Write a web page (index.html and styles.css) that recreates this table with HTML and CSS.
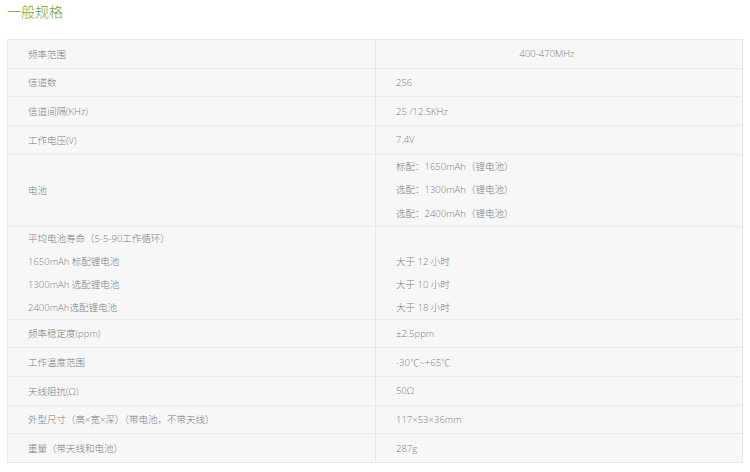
FILE: index.html
```html
<!DOCTYPE html>
<html lang="zh-CN">
<head>
<meta charset="utf-8">
<title>一般规格</title>
<link rel="stylesheet" href="styles.css">
</head>
<body>
<h2 class="title">一般规格</h2>
<table class="spec">
  <tr class="r1">
    <td class="k">频率范围</td>
    <td class="v center">400-470MHz</td>
  </tr>
  <tr class="r1">
    <td class="k">信道数</td>
    <td class="v">256</td>
  </tr>
  <tr class="r1">
    <td class="k">信道间隔(KHz)</td>
    <td class="v">25 /12.5KHz</td>
  </tr>
  <tr class="r1">
    <td class="k">工作电压(V)</td>
    <td class="v">7.4V</td>
  </tr>
  <tr class="r3">
    <td class="k">电池</td>
    <td class="v">
      <div class="ln">标配：1650mAh（锂电池）</div>
      <div class="ln">选配：1300mAh（锂电池）</div>
      <div class="ln">选配：2400mAh（锂电池）</div>
    </td>
  </tr>
  <tr class="r4">
    <td class="k">
      <div class="ln2">平均电池寿命（5-5-90工作循环）</div>
      <div class="ln2">1650mAh 标配锂电池</div>
      <div class="ln2">1300mAh 选配锂电池</div>
      <div class="ln2">2400mAh选配锂电池</div>
    </td>
    <td class="v">
      <div class="ln2">&nbsp;</div>
      <div class="ln2">大于 12 小时</div>
      <div class="ln2">大于 10 小时</div>
      <div class="ln2">大于 18 小时</div>
    </td>
  </tr>
  <tr class="r1">
    <td class="k">频率稳定度(ppm)</td>
    <td class="v">±2.5ppm</td>
  </tr>
  <tr class="r1">
    <td class="k">工作温度范围</td>
    <td class="v">-30℃~+65℃</td>
  </tr>
  <tr class="r1">
    <td class="k">天线阻抗(Ω)</td>
    <td class="v">50Ω</td>
  </tr>
  <tr class="r1">
    <td class="k">外型尺寸（高×宽×深）（带电池，不带天线）</td>
    <td class="v">117×53×36mm</td>
  </tr>
  <tr class="r1">
    <td class="k">重量（带天线和电池）</td>
    <td class="v">287g</td>
  </tr>
</table>
</body>
</html>
```
FILE: styles.css
```css
html, body {
  margin: 0;
  padding: 0;
  background: #ffffff;
}
body {
  padding: 0 7px;
  font-family: "Open Sans", "Noto Sans CJK SC", sans-serif;
  color: #7d7d7d;
}
.title {
  margin: 0;
  font-family: "Noto Sans CJK SC", sans-serif;
  font-weight: 300;
  font-size: 14px;
  line-height: 22px;
  color: #74a03a;
}
.spec {
  margin-top: 17px;
  width: 736px;
  border-collapse: collapse;
  table-layout: fixed;
  border: 1px solid #dcdcdc;
  background: #f7f7f7;
  font-size: 9.5px;
  font-weight: 300;
}
.spec td {
  border: 1px solid #e8e8e8;
  padding: 0 20px;
  vertical-align: middle;
  white-space: nowrap;
}
.spec td.k {
  width: 327px;
}
.spec td.center {
  text-align: center;
  padding-right: 44px;
}
.r1 td { height: 27.67px; }
.r3 td { height: 71px; }
.r4 td { height: 92px; }
.ln { line-height: 23.5px; }
.ln2 { line-height: 23px; }
```
